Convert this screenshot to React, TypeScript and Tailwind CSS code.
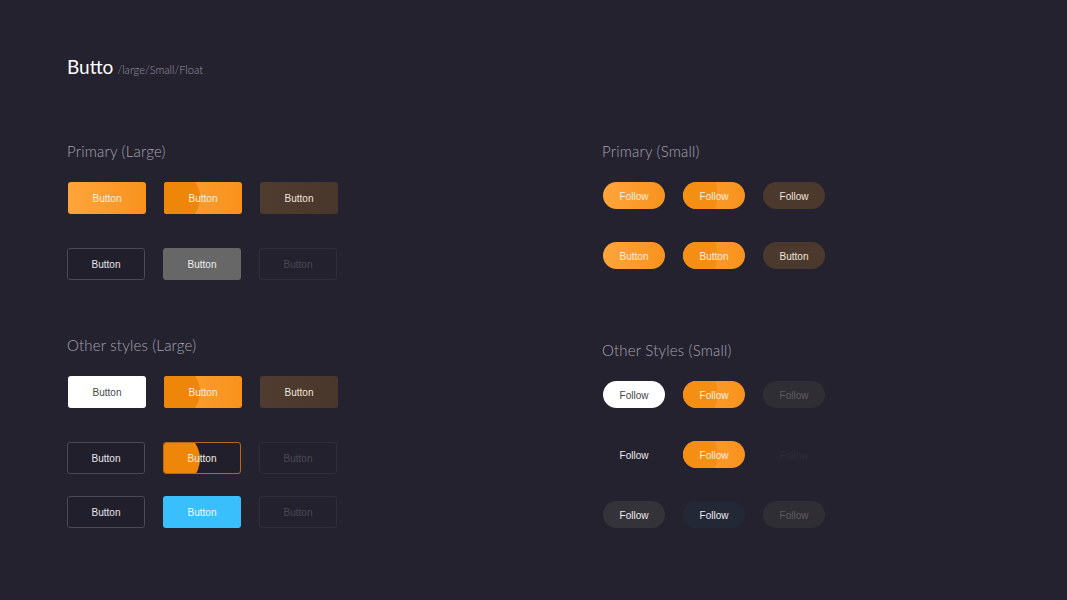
const btnFont = "font-['Liberation_Sans',Arial,sans-serif] text-[10px] leading-[12px]";

type Kind =
  | "orange"
  | "orangePressed"
  | "brown"
  | "outline"
  | "gray"
  | "disabled"
  | "white"
  | "orangeOutlinePressed"
  | "blue";

const largeStyles: Record<Kind, string> = {
  orange: "bg-gradient-to-r from-[#ffa53b] to-[#f8921b] text-[#fbeee0]",
  orangePressed: "bg-gradient-to-r from-[#fca135] to-[#f8921b] text-[#fbeee0]",
  brown: "bg-gradient-to-r from-[#4f3b2f] to-[#4a372b] text-[#ece3da]",
  outline: "border border-[#4b4957] bg-[#211f2b] text-[#e6e4ec]",
  gray: "bg-[#676767] text-[#eeeeee]",
  disabled: "border border-[#2f2d39] bg-[#23212d] text-[#4a4856]",
  white: "bg-white text-[#4a4a4a]",
  orangeOutlinePressed: "border border-[#b4691c] bg-[#211f2b] text-[#f1ece4]",
  blue: "bg-[#38bffc] text-[#f2faff]",
};

function LargeButton({ kind }: { kind: Kind }) {
  const pressed = kind === "orangePressed" || kind === "orangeOutlinePressed";
  return (
    <div
      className={`relative flex h-[32px] w-[78px] items-center justify-center overflow-hidden rounded-[3px] pt-[1px] ${btnFont} ${largeStyles[kind]}`}
    >
      {pressed && (
        <span className="absolute left-[-20px] top-[-12px] h-[56px] w-[56px] rounded-full bg-[#ee8709]" />
      )}
      <span className="relative">Button</span>
    </div>
  );
}

type PillKind =
  | "orange"
  | "orangePressed"
  | "brown"
  | "white"
  | "muted"
  | "plain"
  | "ghost"
  | "dark"
  | "navy"
  | "darkMuted";

const pillStyles: Record<PillKind, string> = {
  orange: "bg-gradient-to-r from-[#ffa53b] to-[#f8921b] text-[#fbeee0]",
  orangePressed: "bg-gradient-to-r from-[#fca135] to-[#f8921b] text-[#fbeee0]",
  brown: "bg-[#4c392d] text-[#ece3da]",
  white: "bg-white text-[#444444]",
  muted: "bg-[#302e35] text-[#5c5a63]",
  plain: "text-[#ecebf0]",
  ghost: "text-[#2e2c38]",
  dark: "bg-[#35333a] text-[#ecebf0]",
  navy: "bg-[#232836] text-[#ecebf0]",
  darkMuted: "bg-[#302e35] text-[#5c5a63]",
};

function Pill({ kind, label }: { kind: PillKind; label: string }) {
  const pressed = kind === "orangePressed";
  return (
    <div
      className={`relative flex h-[27px] w-[62px] items-center justify-center overflow-hidden rounded-full pt-[2px] ${btnFont} ${pillStyles[kind]}`}
    >
      {pressed && (
        <span className="absolute left-[-8px] top-[-12px] h-[51px] w-[42px] rounded-full bg-[#f48f14]" />
      )}
      <span className="relative">{label}</span>
    </div>
  );
}

const heading = "text-[15px] leading-[18px] font-light tracking-[0.2px] text-[#a5a3b0] font-['Lato',sans-serif]";

export default function App() {
  return (
    <div className="min-h-screen w-full bg-[#24222f] pl-[67px] pt-[53px] font-['Lato',sans-serif]">
      <div className="flex h-[24px] items-baseline gap-[4px]">
        <span className="text-[19px] font-normal text-white">Butto</span>
        <span className="text-[11px] font-light text-[#9896a3]">/large/Small/Float</span>
      </div>

      <div className="mt-[65px] flex">
        {/* left */}
        <div className="w-[535px]">
          <div className={heading}>Primary (Large)</div>
          <div className="mt-[22px] flex gap-[18px] pl-[1px]">
            <LargeButton kind="orange" />
            <LargeButton kind="orangePressed" />
            <LargeButton kind="brown" />
          </div>
          <div className="mt-[34px] flex gap-[18px]">
            <LargeButton kind="outline" />
            <LargeButton kind="gray" />
            <LargeButton kind="disabled" />
          </div>

          <div className={`mt-[56px] ${heading}`}>Other styles (Large)</div>
          <div className="mt-[22px] flex gap-[18px] pl-[1px]">
            <LargeButton kind="white" />
            <LargeButton kind="orangePressed" />
            <LargeButton kind="brown" />
          </div>
          <div className="mt-[34px] flex gap-[18px]">
            <LargeButton kind="outline" />
            <LargeButton kind="orangeOutlinePressed" />
            <LargeButton kind="disabled" />
          </div>
          <div className="mt-[22px] flex gap-[18px]">
            <LargeButton kind="outline" />
            <LargeButton kind="blue" />
            <LargeButton kind="disabled" />
          </div>
        </div>

        {/* right */}
        <div>
          <div className={heading}>Primary (Small)</div>
          <div className="mt-[22px] flex gap-[18px] pl-[1px]">
            <Pill kind="orange" label="Follow" />
            <Pill kind="orangePressed" label="Follow" />
            <Pill kind="brown" label="Follow" />
          </div>
          <div className="mt-[33px] flex gap-[18px] pl-[1px]">
            <Pill kind="orange" label="Button" />
            <Pill kind="orangePressed" label="Button" />
            <Pill kind="brown" label="Button" />
          </div>

          <div className={`mt-[72px] ${heading}`}>Other Styles (Small)</div>
          <div className="mt-[22px] flex gap-[18px] pl-[1px]">
            <Pill kind="white" label="Follow" />
            <Pill kind="orangePressed" label="Follow" />
            <Pill kind="muted" label="Follow" />
          </div>
          <div className="mt-[33px] flex gap-[18px] pl-[1px]">
            <Pill kind="plain" label="Follow" />
            <Pill kind="orangePressed" label="Follow" />
            <Pill kind="ghost" label="Follow" />
          </div>
          <div className="mt-[33px] flex gap-[18px] pl-[1px]">
            <Pill kind="dark" label="Follow" />
            <Pill kind="navy" label="Follow" />
            <Pill kind="darkMuted" label="Follow" />
          </div>
        </div>
      </div>
    </div>
  );
}
